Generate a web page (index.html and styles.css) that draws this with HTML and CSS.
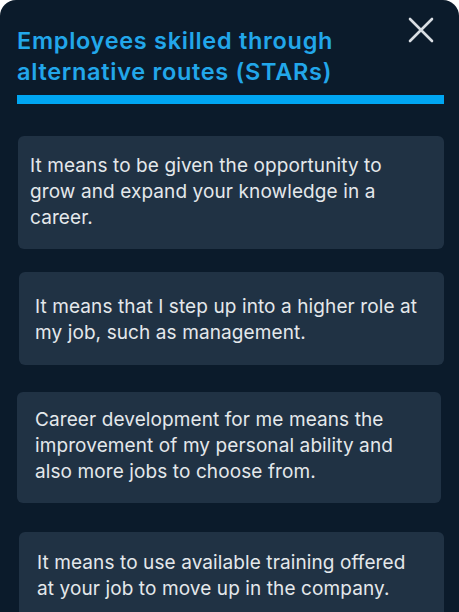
FILE: index.html
```html
<!DOCTYPE html>
<html lang="en">
<head>
<meta charset="utf-8">
<link rel="stylesheet" href="styles.css">
</head>
<body>
<div class="modal">
  <header class="modal-header">
    <h1 class="title">Employees skilled through alternative routes (STARs)</h1>
    <button class="close" aria-label="Close">
      <svg width="26" height="26" viewBox="0 0 26 26"><path d="M2 2 L24 24 M24 2 L2 24" stroke="#d9dee3" stroke-width="2.6" stroke-linecap="round" fill="none"/></svg>
    </button>
  </header>
  <div class="rule"></div>
  <ul class="cards">
    <li class="card c1">It means to be given the opportunity to grow and expand your knowledge in a career.</li>
    <li class="card c2">It means that I step up into a higher role at my job, such as management.</li>
    <li class="card c3">Career development for me means the improvement of my personal ability and also more jobs to choose from.</li>
    <li class="card c4">It means to use available training offered at your job to move up in the company.</li>
  </ul>
</div>
</body>
</html>
```

FILE: styles.css
```css
html, body { margin: 0; padding: 0; background: #ffffff; }
body { width: 459px; height: 612px; overflow: hidden; }
.modal {
  background: #0b1b2b;
  border-radius: 16px 16px 0 0;
  height: 612px;
  padding: 0 15px 0 17px;
  box-sizing: border-box;
  font-family: Inter, "Noto Sans", sans-serif;
}
.modal-header { position: relative; padding-top: 25px; }
.title {
  margin: 0;
  width: 340px;
  color: #22a7ea;
  font-size: 23.5px;
  font-weight: 600;
  line-height: 31px;
  letter-spacing: 0.7px;
}
.close {
  position: absolute;
  top: 17px;
  right: 10px;
  background: none;
  border: 0;
  padding: 0;
  width: 26px;
  height: 26px;
}
.rule { height: 9px; background: #00a6f2; margin-top: 8px; }
.cards { list-style: none; margin: 0; padding: 0; display: flex; flex-direction: column; }
.card {
  background: #203244;
  border-radius: 6px;
  color: #e4e8eb;
  font-size: 19px;
  font-weight: 400;
  letter-spacing: 0.1px;
  line-height: 26px;
}
.c1 { margin: 32px 0 0 1px; padding: 17px 28px 18px 12px; }
.c2 { margin: 23px 0 0 2px; padding: 22px 23px 19px 16px; }
.c3 { margin: 27px 3px 0 0; padding: 15px 20px 18px 18px; }
.c4 { margin: 29px 0 0 2px; padding: 18px 21px 20px 18px; }
```
